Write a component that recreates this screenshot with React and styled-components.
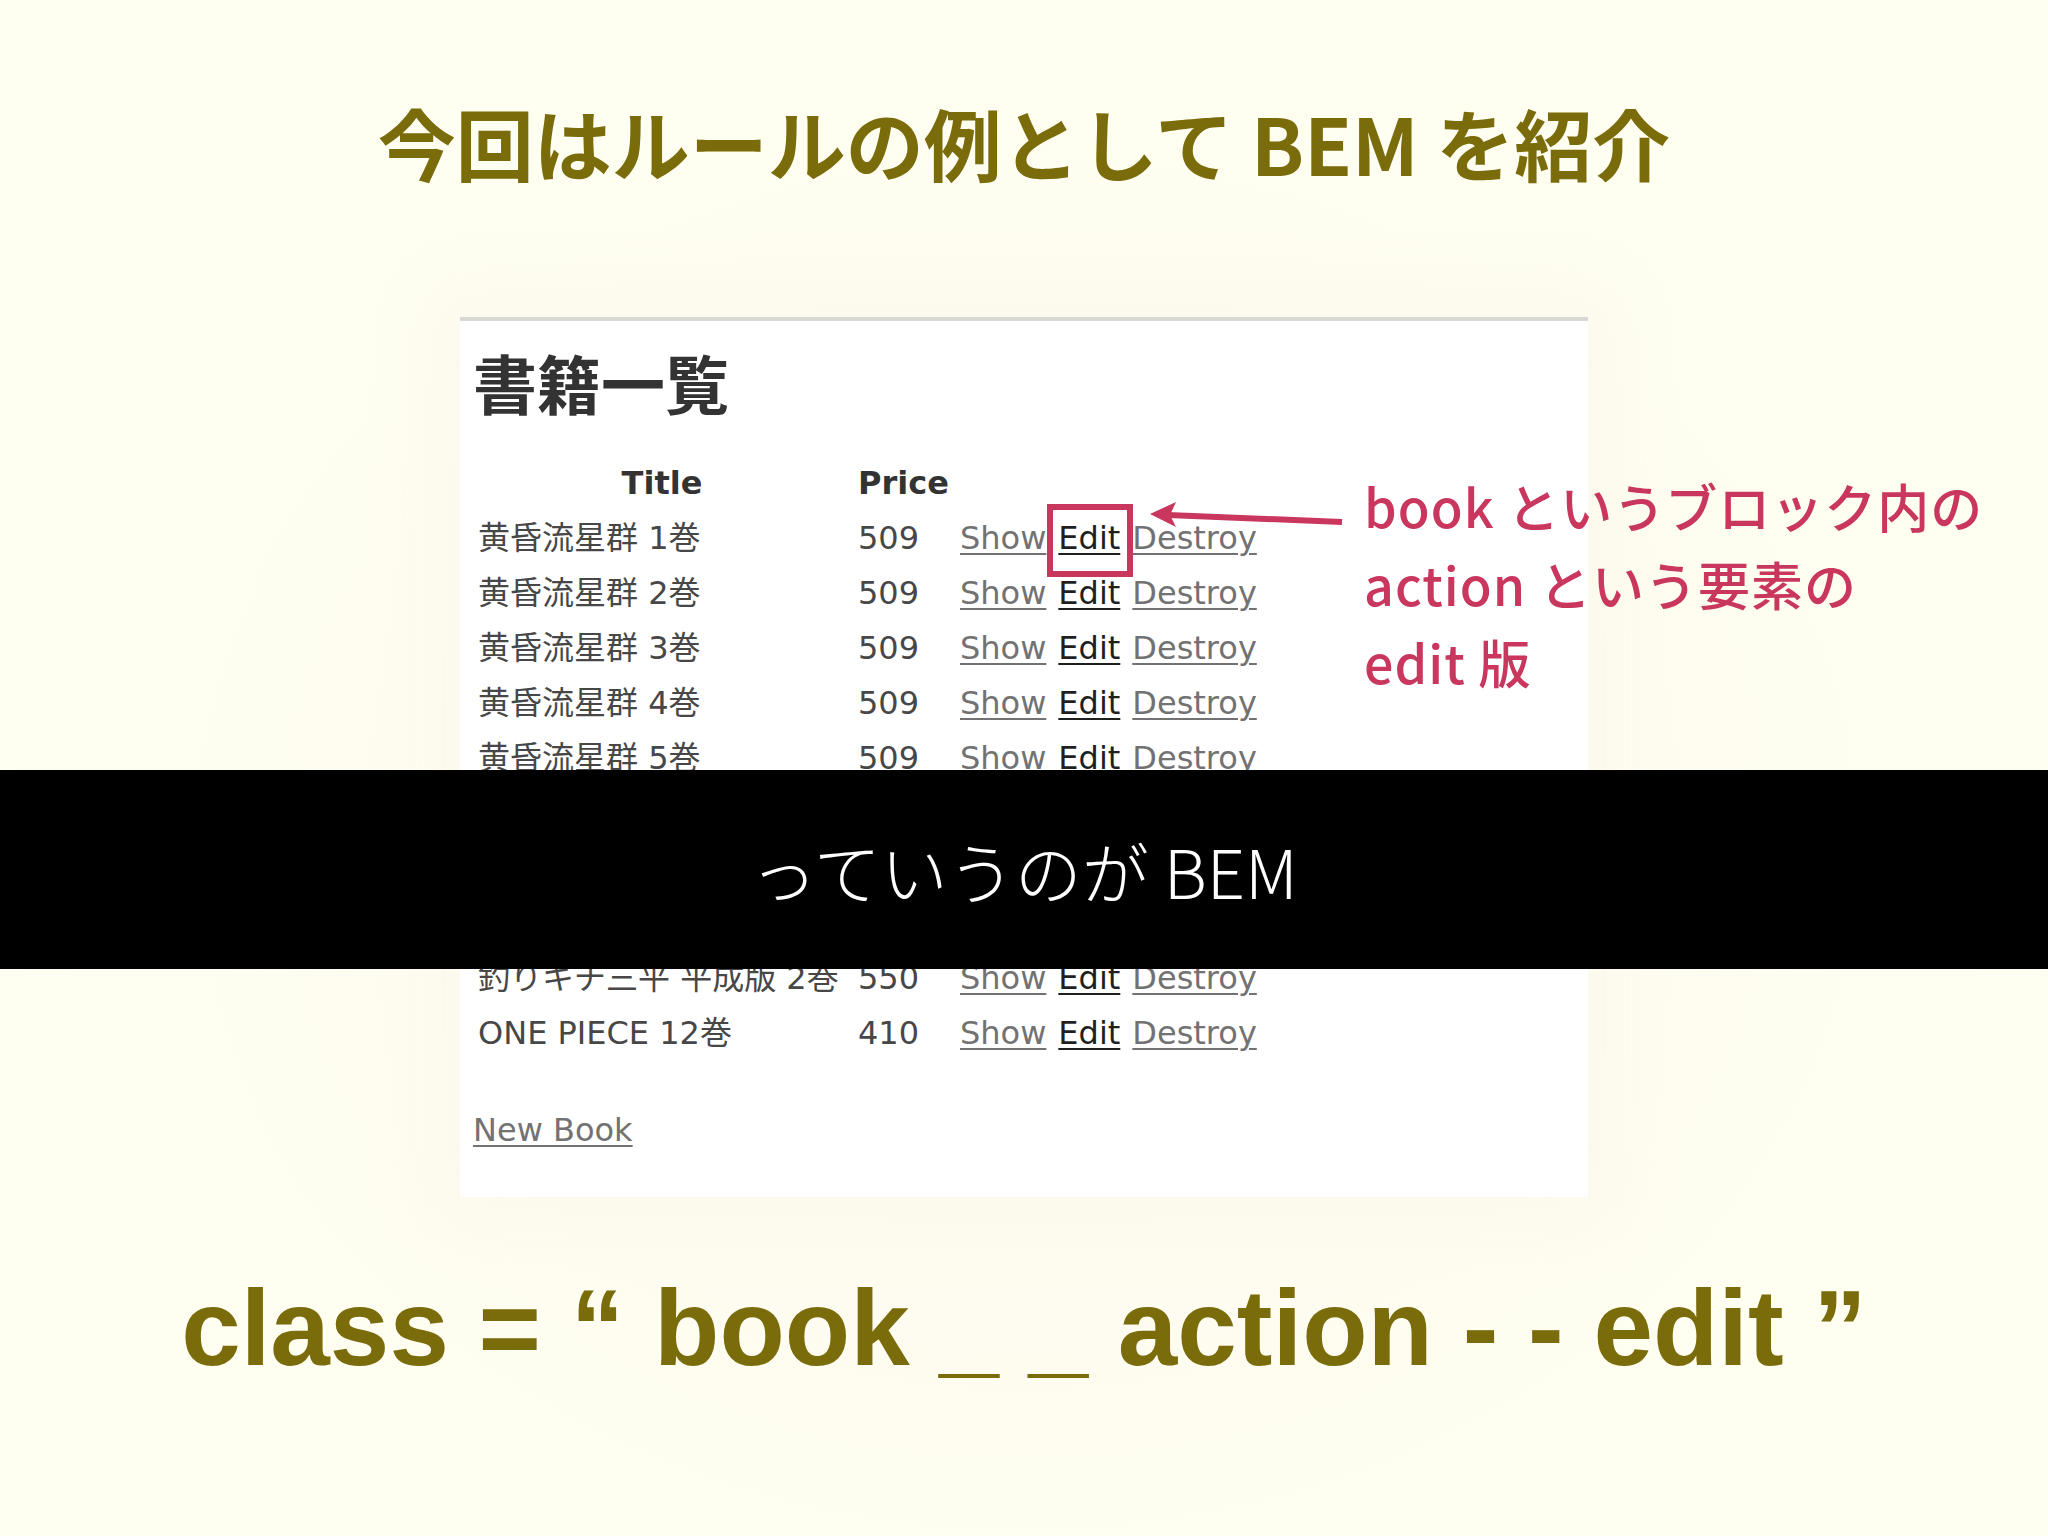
import React from "react";
import styled, { createGlobalStyle } from "styled-components";

const GlobalStyle = createGlobalStyle`
  html, body {
    margin: 0;
    padding: 0;
    background: #fefff1;
  }
  body {
    font-family: "Noto Sans CJK JP", "Noto Sans", sans-serif;
  }
`;

const Page = styled.div`
  position: relative;
  width: 2048px;
  height: 1536px;
  overflow: hidden;
  box-sizing: border-box;
  padding-top: 103px;
  display: flex;
  flex-direction: column;
  align-items: center;
  background: radial-gradient(ellipse at 50% 55%, #fdfaef 0%, #fefcf0 40%, #fefff1 75%);
`;

const SlideTitle = styled.h1`
  margin: 0;
  font-family: "Noto Sans CJK JP", sans-serif;
  font-weight: 700;
  font-size: 78px;
  line-height: 78px;
  color: #7b6c0b;
  white-space: nowrap;
`;

const Card = styled.section`
  position: relative;
  box-sizing: border-box;
  margin-top: 136px;
  width: 1128px;
  height: 880px;
  padding: 0 13px;
  background: #ffffff;
  border-top: 4px solid #d9d9d4;
  box-shadow: 0 0 60px 24px rgba(252, 246, 234, 0.6);
`;

const Heading = styled.h2`
  margin: 28px 0 0 0;
  font-family: "Noto Sans CJK JP", sans-serif;
  font-weight: 700;
  font-size: 64px;
  line-height: 64px;
  color: #333333;
`;

const Table = styled.div`
  margin-top: 43px;
  padding-left: 5px;
  display: flex;
  flex-direction: column;
`;

const Row = styled.div`
  display: grid;
  grid-template-columns: 368px 114px auto;
  height: 55px;
  align-items: center;
  font-family: "DejaVu Sans", "Noto Sans CJK JP", sans-serif;
  font-size: 32px;
  line-height: 37px;
  color: #474747;
  white-space: nowrap;
  visibility: ${(p) => (p.$concealed ? "hidden" : "visible")};
`;

const HeadCell = styled.div`
  font-weight: 700;
  color: #333333;
  text-align: ${(p) => (p.$center ? "center" : "left")};
  padding-left: ${(p) => (p.$indent ? "12px" : "0")};
`;

const Cell = styled.div`
  padding-left: ${(p) => (p.$indent ? "12px" : "0")};
`;

const Actions = styled.div`
  display: flex;
  gap: 12px;
  align-items: center;
`;

const ActionLink = styled.a`
  position: relative;
  display: inline-block;
  color: ${(p) => (p.$dark ? "#1f1f1f" : "#727272")};
  text-decoration: underline;
  text-underline-offset: 4px;
  text-decoration-thickness: 2px;
  cursor: pointer;

  ${(p) =>
    p.$highlight &&
    `
    &::after {
      content: "";
      position: absolute;
      left: -11px;
      right: -13px;
      top: -16px;
      bottom: -20px;
      border: 6px solid #c9365e;
    }
  `}
`;

const NewBook = styled.a`
  display: block;
  margin-top: 42px;
  font-family: "DejaVu Sans", sans-serif;
  font-size: 32px;
  line-height: 55px;
  color: #727272;
  text-decoration: underline;
  text-underline-offset: 4px;
  text-decoration-thickness: 2px;
`;

const Arrow = styled.svg`
  position: absolute;
  left: 688px;
  top: 177px;
  overflow: visible;
`;

const Callout = styled.div`
  position: absolute;
  left: 904px;
  top: 146px;
  font-family: "Noto Sans CJK JP", sans-serif;
  font-weight: 500;
  font-size: 52px;
  letter-spacing: 1px;
  line-height: 78px;
  color: #c9365e;
  white-space: nowrap;
`;

const CalloutLine = styled.div``;

const CaptionBand = styled.div`
  position: absolute;
  left: 0;
  right: 0;
  top: 770px;
  height: 199px;
  background: #000000;
  display: flex;
  align-items: center;
  justify-content: center;
`;

const CaptionText = styled.span`
  font-family: "Noto Sans CJK JP", sans-serif;
  font-weight: 300;
  font-size: 67px;
  line-height: 67px;
  color: #ffffff;
  white-space: nowrap;
`;

const ClassLine = styled.div`
  margin-top: 78px;
  font-family: "Liberation Sans", Arial, sans-serif;
  font-weight: 700;
  font-size: 107px;
  line-height: 106px;
  color: #7b6c0b;
  white-space: pre;
`;

const books = [
  { title: "黄昏流星群 1巻", price: 509 },
  { title: "黄昏流星群 2巻", price: 509 },
  { title: "黄昏流星群 3巻", price: 509 },
  { title: "黄昏流星群 4巻", price: 509 },
  { title: "黄昏流星群 5巻", price: 509 },
  { title: "黄昏流星群 6巻", price: 509, concealed: true },
  { title: "黄昏流星群 7巻", price: 509, concealed: true },
  { title: "釣りキチ三平 平成版 1巻", price: 550, concealed: true },
  { title: "釣りキチ三平 平成版 2巻", price: 550 },
  { title: "ONE PIECE 12巻", price: 410 },
];

export default function App() {
  return (
    <>
      <GlobalStyle />
      <Page>
        <SlideTitle>今回はルールの例として BEM を紹介</SlideTitle>

        <Card>
          <Heading>書籍一覧</Heading>
          <Table>
            <Row>
              <HeadCell $center>Title</HeadCell>
              <HeadCell $indent>Price</HeadCell>
              <div />
            </Row>
            {books.map((b, i) => (
              <Row key={i} $concealed={b.concealed}>
                <Cell>{b.title}</Cell>
                <Cell $indent>{b.price}</Cell>
                <Actions>
                  <ActionLink>Show</ActionLink>
                  <ActionLink $dark $highlight={i === 0}>
                    Edit
                  </ActionLink>
                  <ActionLink>Destroy</ActionLink>
                </Actions>
              </Row>
            ))}
          </Table>
          <NewBook>New Book</NewBook>

          <Arrow width="197" height="34" viewBox="0 0 197 34">
            <line x1="20" y1="17" x2="194" y2="24" stroke="#c9365e" strokeWidth="6" />
            <path d="M2 16 L28 4 L22 17 L28 29 Z" fill="#c9365e" />
          </Arrow>

          <Callout>
            <CalloutLine>book というブロック内の</CalloutLine>
            <CalloutLine>action という要素の</CalloutLine>
            <CalloutLine>edit 版</CalloutLine>
          </Callout>
        </Card>

        <ClassLine>{"class = “ book _ _ action - - edit ”"}</ClassLine>

        <CaptionBand>
          <CaptionText>っていうのが BEM</CaptionText>
        </CaptionBand>
      </Page>
    </>
  );
}
